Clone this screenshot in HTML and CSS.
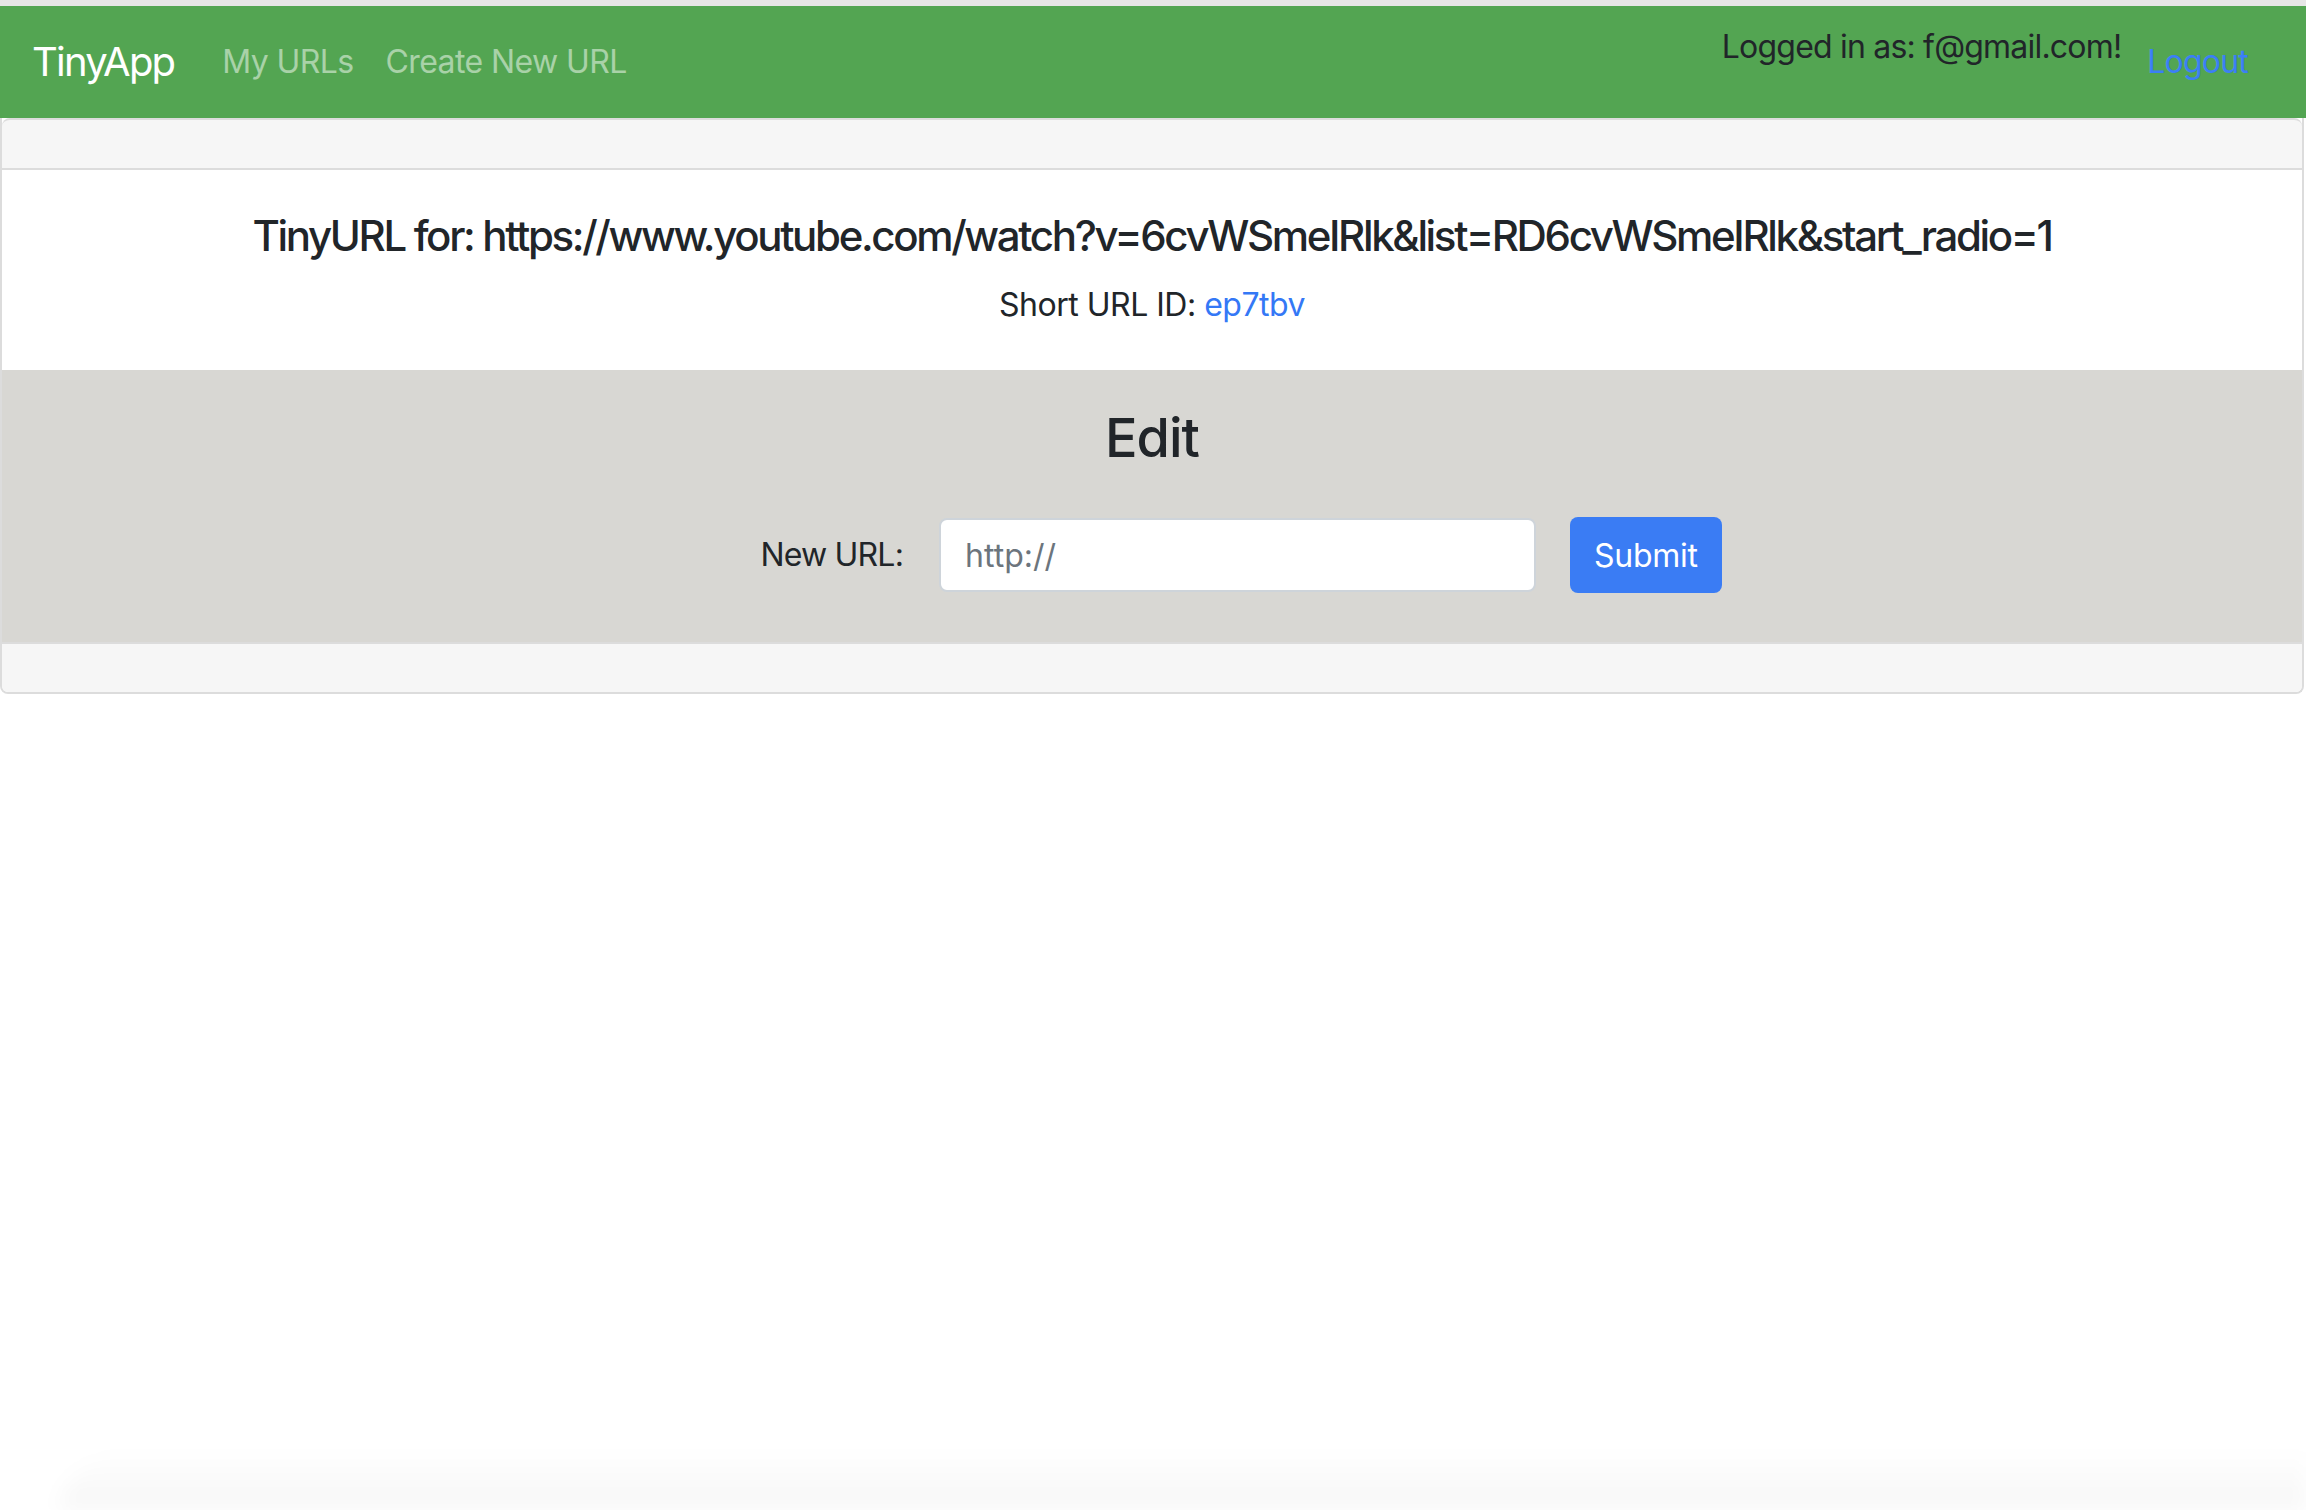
FILE: index.html
```html
<!DOCTYPE html>
<html lang="en">
<head>
<meta charset="utf-8">
<title>TinyApp - URL</title>
<link rel="stylesheet" href="styles.css">
</head>
<body>
<div class="topline"></div>
<nav class="navbar">
  <a class="brand" href="#">TinyApp</a>
  <div class="nav-links">
    <a class="nav-link" href="#">My URLs</a>
    <a class="nav-link" href="#">Create New URL</a>
  </div>
  <div class="nav-right">
    <span class="logged">Logged in as: f@gmail.com!</span>
    <a class="logout" href="#">Logout</a>
  </div>
</nav>
<main class="card">
  <div class="card-header"></div>
  <div class="card-body">
    <h4 class="card-title">TinyURL for: https://www.youtube.com/watch?v=6cvWSmeIRlk&amp;list=RD6cvWSmeIRlk&amp;start_radio=1</h4>
    <p class="card-text">Short URL ID: <a href="#" class="short-link">ep7tbv</a></p>
  </div>
  <section class="edit">
    <h2 class="edit-title">Edit</h2>
    <form class="edit-form">
      <label class="edit-label" for="longURL">New URL:</label>
      <input class="edit-input" id="longURL" type="text" placeholder="http://">
      <button class="btn-submit" type="submit">Submit</button>
    </form>
  </section>
  <div class="card-footer"></div>
</main>
<div class="bottom-shade"></div>
</body>
</html>
```
FILE: styles.css
```css
* { box-sizing: border-box; }
html, body { margin: 0; padding: 0; }
body {
  font-family: "Inter", "Roboto", "Liberation Sans", sans-serif;
  color: #212529;
  background: #ffffff;
  font-size: 32px;
  line-height: 1.5;
  min-height: 1510px;
  position: relative;
  overflow: hidden;
}
a { text-decoration: none; }

.topline { height: 6px; background: #e6e6e6; }

.navbar {
  height: 112px;
  background: #53a552;
  display: flex;
  align-items: center;
  padding: 0 32px;
}
.brand {
  color: #ffffff;
  font-size: 40px;
  line-height: 60px;
  margin-right: 32px;
  letter-spacing: -1.8px;
}
.nav-links { display: flex; }
.nav-link {
  color: rgba(255, 255, 255, 0.5);
  padding: 0 16px;
  font-size: 32px;
  letter-spacing: -0.6px;
}
.nav-right {
  margin-left: auto;
  display: flex;
  align-items: center;
  margin-right: 10px;
}
.logged {
  position: relative;
  top: -15px;
  color: #212529;
  letter-spacing: -0.8px;
}
.logout {
  color: #3b7ff6;
  padding: 0 16px;
  margin-left: 10px;
  letter-spacing: -0.8px;
}

.card {
  display: block;
  margin: 0 2px 0 0;
  border: 2px solid #dcdcdc;
  border-top: none;
  border-radius: 0 0 8px 8px;
  overflow: hidden;
}
.card-header {
  height: 52px;
  background: #f6f6f6;
  border-bottom: 2px solid #dcdcdc;
  border-top: 2px solid #dcdcdc;
  border-radius: 8px 8px 0 0;
}
.card-body {
  padding: 41px 40px 41px;
  text-align: center;
  background: #ffffff;
}
.card-title {
  margin: 0 0 20px;
  font-size: 42px;
  font-weight: 500;
  line-height: 1.2;
  letter-spacing: -2.35px;
}
.card-text {
  margin: 0;
  letter-spacing: -0.5px;
}
.short-link { color: #3478f6; }

.edit {
  background: #d8d7d3;
  padding: 36px 0 49px;
  text-align: center;
}
.edit-title {
  margin: 0 0 46px;
  font-size: 54px;
  font-weight: 500;
  line-height: 1.2;
  letter-spacing: -1px;
}
.edit-form {
  display: flex;
  align-items: center;
  justify-content: center;
  padding-left: 178px;
}
.edit-label {
  margin-right: 36px;
  letter-spacing: -0.8px;
}
.edit-input {
  width: 597px;
  height: 74px;
  border: 2px solid #ced4da;
  border-radius: 8px;
  padding: 12px 24px;
  font-family: inherit;
  font-size: 32px;
  color: #495057;
  background: #ffffff;
  margin-right: 34px;
}
.edit-input::placeholder { color: #6c757d; }
.btn-submit {
  height: 76px;
  padding: 0 24px;
  background: #3a7cf4;
  color: #ffffff;
  border: none;
  border-radius: 8px;
  font-family: inherit;
  font-size: 32px;
  letter-spacing: -0.3px;
}
.card-footer {
  height: 50px;
  background: #f6f6f6;
  border-top: 2px solid #dcdcdc;
}

.bottom-shade {
  position: absolute;
  left: 60px;
  right: 0;
  bottom: 0;
  height: 60px;
  background: linear-gradient(to bottom, rgba(0,0,0,0), rgba(0,0,0,0.035));
  border-top-left-radius: 80px 60px;
  filter: blur(10px);
}
```
